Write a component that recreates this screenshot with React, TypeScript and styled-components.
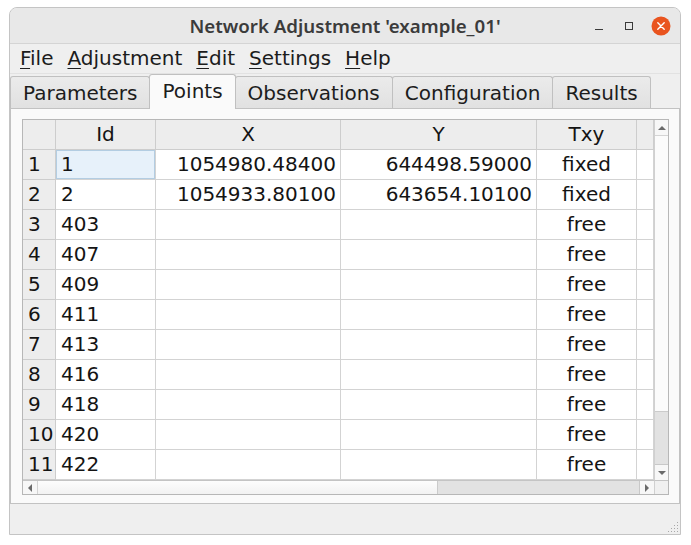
import React from 'react';
import styled, { createGlobalStyle, css } from 'styled-components';

const Global = createGlobalStyle`
  html, body { margin: 0; padding: 0; background: #ffffff; }
  body { font-family: "DejaVu Sans", "Liberation Sans", sans-serif; }
  #root { padding: 7px 0 0 9px; }
`;

const Window = styled.div`
  width: 672px;
  height: 528px;
  box-sizing: border-box;
  border: 1px solid #c4c4c4;
  border-radius: 8px 8px 0 0;
  background: #efefef;
  display: flex;
  flex-direction: column;
  overflow: hidden;
`;

const TitleBar = styled.div`
  flex: none;
  height: 36px;
  box-sizing: border-box;
  background: #e8e8e8;
  border-bottom: 1px solid #d4d4d4;
  display: grid;
  grid-template-columns: 1fr auto 1fr;
  align-items: center;
`;

const Title = styled.div`
  grid-column: 2;
  font-family: "Noto Sans", "DejaVu Sans", sans-serif;
  font-weight: 600;
  font-size: 18.7px;
  color: #3b3b3b;
  white-space: nowrap;
`;

const Controls = styled.div`
  grid-column: 3;
  justify-self: end;
  display: flex;
  align-items: center;
  padding-right: 7px;
`;

const CtrlBtn = styled.div<{ $gap: number }>`
  width: 24px;
  height: 24px;
  margin-left: ${p => p.$gap}px;
  display: flex;
  align-items: center;
  justify-content: center;
`;

const MenuBar = styled.div`
  flex: none;
  height: 30px;
  box-sizing: border-box;
  border-bottom: 1px solid #e2e2e2;
  display: flex;
  align-items: center;
  padding-left: 3px;
  font-size: 20px;
  color: #1c1c1c;
`;

const MenuItem = styled.div`
  padding: 0 7px;
  line-height: 29px;
  u { text-decoration-thickness: 1px; text-underline-offset: 3px; }
`;

const TabBar = styled.div`
  flex: none;
  height: 34px;
  display: flex;
  align-items: flex-end;
  position: relative;
  z-index: 2;
`;

const Tab = styled.div<{ $active?: boolean }>`
  box-sizing: border-box;
  height: 32px;
  padding: 0 12px;
  margin-left: -1px;
  border: 1px solid #c0c0c0;
  border-bottom: none;
  border-radius: 3px 3px 0 0;
  background: linear-gradient(#ebebeb, #e1e1e1);
  font-size: 20px;
  line-height: 32px;
  color: #1c1c1c;
  white-space: nowrap;
  &:first-child { margin-left: 0; }
  ${p => p.$active && css`
    height: 35px;
    margin-bottom: -1px;
    background: #fafafa;
    line-height: 33px;
    position: relative;
    z-index: 3;
  `}
`;

const Pane = styled.div`
  flex: none;
  height: 396px;
  box-sizing: border-box;
  border: 1px solid #c2c2c2;
  background: #fafafa;
  padding: 10px 10px 8px 11px;
`;

const Frame = styled.div`
  width: 647px;
  height: 376px;
  box-sizing: border-box;
  border: 1px solid #b7b7b7;
  display: grid;
  grid-template-columns: 631px 14px;
  grid-template-rows: 360px 14px;
  background: #ffffff;
`;

const Viewport = styled.div`
  overflow: hidden;
  display: grid;
  grid-template-columns: 33px 100px 185px 196px 100px 17px;
  grid-auto-rows: 30px;
`;

const Cell = styled.div<{ $align: 'left' | 'right' | 'center'; $head?: boolean; $selected?: boolean }>`
  box-sizing: border-box;
  border-right: 1px solid #d3d3d3;
  border-bottom: 1px solid #d3d3d3;
  font-size: 20px;
  line-height: 29px;
  color: #141414;
  white-space: nowrap;
  overflow: hidden;
  text-align: ${p => p.$align};
  padding: ${p => (p.$align === 'right' ? '0 4px 0 0' : p.$align === 'left' ? '0 0 0 5px' : '0')};
  background: ${p => (p.$head ? '#ededed' : '#ffffff')};
  ${p => p.$head && css`border-color: #cdcdcd;`}
  ${p => p.$selected && css`
    background: #e7f1fa;
    box-shadow: inset 0 0 0 1px #b3cde2;
  `}
`;

const VScroll = styled.div`
  display: flex;
  flex-direction: column;
  background: #fbfbfb;
  border-left: 1px solid #d0d0d0;
`;

const HScroll = styled.div`
  display: flex;
  background: linear-gradient(#fdfdfd, #f2f2f2);
  border-top: 1px solid #c4c4c4;
`;

const Arrow = styled.div<{ $dir: 'v' | 'h' }>`
  flex: none;
  ${p => (p.$dir === 'v' ? 'height: 15px;' : 'width: 14px;')}
  display: flex;
  align-items: center;
  justify-content: center;
  background: #f7f7f7;
  ${p => (p.$dir === 'v' ? 'border-bottom: 1px solid #d4d4d4;' : 'border-right: 1px solid #d4d4d4;')}
`;

const ArrowEnd = styled(Arrow)`
  ${p => (p.$dir === 'v' ? 'border-bottom: none; border-top: 1px solid #c8c8c8;' : 'border-right: none; border-left: 1px solid #c8c8c8;')}
`;

const Track = styled.div<{ $dir: 'v' | 'h' }>`
  flex: 1;
  display: flex;
  flex-direction: ${p => (p.$dir === 'v' ? 'column' : 'row')};
  justify-content: flex-end;
`;

const Handle = styled.div<{ $dir: 'v' | 'h' }>`
  flex: none;
  background: #e2e2e2;
  ${p => (p.$dir === 'v'
    ? 'height: 52px; border-top: 1px solid #cbcbcb;'
    : 'width: 201px; border-left: 1px solid #cbcbcb;')}
`;

const Corner = styled.div`
  background: #f0f0f0;
  border-top: 1px solid #c4c4c4;
  border-left: 1px solid #d0d0d0;
`;

const StatusBar = styled.div`
  flex: 1;
  background: #efefef;
  display: flex;
  justify-content: flex-end;
  align-items: flex-end;
  padding: 0 1px 1px 0;
`;

const Tri = ({ d }: { d: 'up' | 'down' | 'left' | 'right' }) => {
  const pts = {
    up: '0,5 4,1 8,5',
    down: '0,1 4,5 8,1',
    left: '5,0 1,4 5,8',
    right: '1,0 5,4 1,8',
  }[d];
  const w = d === 'up' || d === 'down' ? 8 : 6;
  const h = d === 'up' || d === 'down' ? 6 : 8;
  return (
    <svg width={w} height={h} viewBox={`0 0 ${w} ${h}`}>
      <polygon points={pts} fill="#6a6a6a" />
    </svg>
  );
};

const Grip = () => (
  <svg width="12" height="12" viewBox="0 0 12 12">
    {[[10, 1], [7, 4], [10, 4], [4, 7], [7, 7], [10, 7], [1, 10], [4, 10], [7, 10], [10, 10]].map(([x, y], i) => (
      <rect key={i} x={x} y={y} width="1" height="1" fill="#a8a8a8" />
    ))}
  </svg>
);

type Row = { id: string; x?: string; y?: string; t: string };
const rows: Row[] = [
  { id: '1', x: '1054980.48400', y: '644498.59000', t: 'fixed' },
  { id: '2', x: '1054933.80100', y: '643654.10100', t: 'fixed' },
  { id: '403', t: 'free' },
  { id: '407', t: 'free' },
  { id: '409', t: 'free' },
  { id: '411', t: 'free' },
  { id: '413', t: 'free' },
  { id: '416', t: 'free' },
  { id: '418', t: 'free' },
  { id: '420', t: 'free' },
  { id: '422', t: 'free' },
];

const menus = ['File', 'Adjustment', 'Edit', 'Settings', 'Help'];
const tabs = ['Parameters', 'Points', 'Observations', 'Configuration', 'Results'];

export default function App() {
  return (
    <>
      <Global />
      <Window>
        <TitleBar>
          <Title>Network Adjustment 'example_01'</Title>
          <Controls>
            <CtrlBtn $gap={0}>
              <svg width="10" height="10" viewBox="0 0 10 10">
                <rect x="1" y="8" width="8" height="1" fill="#3a3a3a" />
              </svg>
            </CtrlBtn>
            <CtrlBtn $gap={6}>
              <svg width="10" height="10" viewBox="0 0 10 10">
                <rect x="1.5" y="1.5" width="7" height="7" fill="none" stroke="#3a3a3a" strokeWidth="1" />
              </svg>
            </CtrlBtn>
            <CtrlBtn $gap={8}>
              <svg width="20" height="20" viewBox="0 0 20 20">
                <circle cx="10" cy="10" r="9.5" fill="#e9541f" />
                <path d="M6.8 6.8 L13.2 13.2 M13.2 6.8 L6.8 13.2" stroke="#ffffff" strokeWidth="1.4" strokeLinecap="round" />
              </svg>
            </CtrlBtn>
          </Controls>
        </TitleBar>
        <MenuBar>
          {menus.map(m => (
            <MenuItem key={m}>
              <u>{m[0]}</u>
              {m.slice(1)}
            </MenuItem>
          ))}
        </MenuBar>
        <TabBar>
          {tabs.map(t => (
            <Tab key={t} $active={t === 'Points'}>{t}</Tab>
          ))}
        </TabBar>
        <Pane>
          <Frame>
            <Viewport>
              <Cell $align="center" $head />
              <Cell $align="center" $head>Id</Cell>
              <Cell $align="center" $head>X</Cell>
              <Cell $align="center" $head>Y</Cell>
              <Cell $align="center" $head>Txy</Cell>
              <Cell $align="center" $head />
              {rows.map((r, i) => (
                <React.Fragment key={r.id}>
                  <Cell $align="left" $head>{i + 1}</Cell>
                  <Cell $align="left" $selected={i === 0}>{r.id}</Cell>
                  <Cell $align="right">{r.x ?? ''}</Cell>
                  <Cell $align="right">{r.y ?? ''}</Cell>
                  <Cell $align="center">{r.t}</Cell>
                  <Cell $align="center" />
                </React.Fragment>
              ))}
            </Viewport>
            <VScroll>
              <Arrow $dir="v"><Tri d="up" /></Arrow>
              <Track $dir="v"><Handle $dir="v" /></Track>
              <ArrowEnd $dir="v"><Tri d="down" /></ArrowEnd>
            </VScroll>
            <HScroll>
              <Arrow $dir="h"><Tri d="left" /></Arrow>
              <Track $dir="h"><Handle $dir="h" /></Track>
              <ArrowEnd $dir="h"><Tri d="right" /></ArrowEnd>
            </HScroll>
            <Corner />
          </Frame>
        </Pane>
        <StatusBar>
          <Grip />
        </StatusBar>
      </Window>
    </>
  );
}
